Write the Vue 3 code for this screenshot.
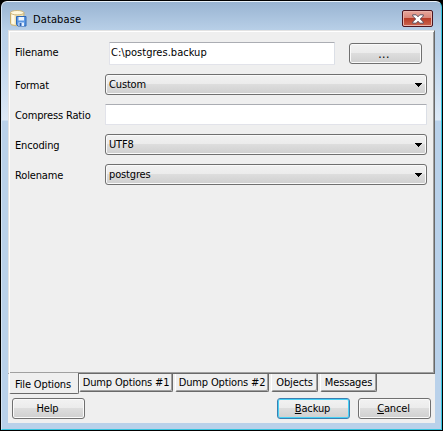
<script setup>
const fields = [
  { label: 'Format', value: 'Custom', combo: true },
  { label: 'Compress Ratio', value: '', combo: false },
  { label: 'Encoding', value: 'UTF8', combo: true },
  { label: 'Rolename', value: 'postgres', combo: true },
]
const tabs = [
  { text: 'File Options', cls: 'file' },
  { text: 'Dump Options #1', cls: 'dump-one' },
  { text: 'Dump Options #2', cls: 'dump-two' },
  { text: 'Objects', cls: 'objects' },
  { text: 'Messages', cls: 'messages' },
]
</script>

<template>
  <div class="window">
    <div class="frame">
      <header class="titlebar">
        <svg class="app-icon" width="17" height="17" viewBox="0 0 17 17">
          <path d="M0.500 2.500v11.200c0 1.200 3 2 6.700 2s6.700-.8 6.700-2V2.500z" fill="#f1e3b4" stroke="#c6ae72" />
          <path d="M1.500 4v9.500l3 1V5z" fill="#fffbe9" />
          <ellipse cx="7.200" cy="2.700" rx="6.700" ry="2.200" fill="#fff8dc" stroke="#cdb880" />
          <path d="M6.500 6.500h9.500v9.500H8l-1.500-1.500z" fill="#5b97e2" stroke="#2c68b8" />
          <rect x="8.500" y="7" width="5.500" height="3.500" fill="#eaf4ff" />
          <rect x="8.500" y="12.500" width="5.500" height="3.500" fill="#e4efff" />
          <rect x="9.500" y="13" width="2" height="3" fill="#2b62b4" />
        </svg>
        <span class="title">Database</span>
        <button class="close" aria-label="Close">
          <svg width="12" height="10" viewBox="0 0 12 10">
            <path d="M.7 .8H4.200L6 2.800 7.800 .8h3.500v1.200L8.300 5l3 3v1.200H7.800L6 7.200 4.200 9.200H.7V8l3-3-3-3z" fill="#fff" stroke="#4f4658" stroke-width=".9" />
          </svg>
        </button>
      </header>
      <main class="client">
        <section class="page">
          <div class="row file-row">
            <label class="label">Filename</label>
            <div class="input filename">C:\postgres.backup</div>
            <button class="button browse">...</button>
          </div>
          <div v-for="f in fields" :key="f.label" class="row">
            <label class="label">{{ f.label }}</label>
            <div :class="['control', f.combo ? 'combo' : 'input']">
              <span>{{ f.value }}</span>
              <svg v-if="f.combo" width="7" height="4" viewBox="0 0 7 4" shape-rendering="crispEdges">
                <path d="M0 0h7v1H6v1H5v1H4v1H3V3H2V2H1V1H0z" fill="#000" />
              </svg>
            </div>
          </div>
        </section>
        <nav class="tabs">
          <div v-for="(t, i) in tabs" :key="t.text" :class="['tab', t.cls, { active: i === 0 }]"><span>{{ t.text }}</span></div>
        </nav>
        <footer class="actions">
          <button class="button">Help</button>
          <button class="button primary"><u>B</u>ackup</button>
          <button class="button"><u>C</u>ancel</button>
        </footer>
      </main>
    </div>
  </div>
</template>

<style>
body { margin: 0; background: #000; }
</style>

<style scoped>
* { box-sizing: border-box; }
.window {
  width: 443px;
  height: 431px;
  padding: 1px;
  background: #000;
  border-radius: 6px 6px 0 0;
  font: 11px/14px "DejaVu Sans Condensed", "DejaVu Sans", sans-serif;
  font-stretch: condensed;
  letter-spacing: -.15px;
  color: #000;
}
.frame {
  height: 429px;
  padding: 0 6px 6px;
  border: 1px solid #34c4df;
  border-top-color: #e9f2fa;
  border-left-color: #d5e4f3;
  border-radius: 6px 6px 0 0;
  background: linear-gradient(#99b4d2 0, #b9d0e8 29px, #bcd3eb 50px, #dde9f6 118px, #b9d1ea 119px);
}
.titlebar { height: 28px; display: flex; align-items: flex-start; padding: 8px 2px 0 2px; }
.app-icon { flex: none; }
.title { line-height: 16px; margin: 2px 0 0 6px; letter-spacing: .12px; }
.close {
  width: 31px;
  height: 17px;
  margin-left: auto;
  padding: 0;
  display: flex;
  align-items: center;
  justify-content: center;
  border: 1px solid #4c1520;
  border-radius: 2px;
  background: linear-gradient(#e8a79c 0, #d98679 46%, #b83c27 50%, #cc6650 100%);
  box-shadow: inset 0 0 0 1px #e9b3aa;
}
.client { width: 427px; height: 393px; background: #efefef; display: flex; flex-direction: column; }
.page {
  height: 344px;
  padding: 11px 6px 0;
  border-top: 1px solid #e3e3e3;
  border-left: 1px solid #e3e3e3;
  border-right: 1px solid #696969;
  border-bottom: 1px solid #696969;
  box-shadow: inset 1px 1px 0 #fff, inset -1px -1px 0 #a0a0a0;
}
.row { display: flex; align-items: center; height: 21px; margin-bottom: 9px; }
.file-row { height: 23px; }
.label { width: 90px; flex: none; padding-top: 2px; }
.file-row .label { padding: 0 0 2px; }
.input { background: #fff; border: 1px solid #e2e3ea; border-top-color: #abadb3; border-right-color: #dbdfe6; border-radius: 1px; }
.filename { width: 226px; height: 23px; margin-left: 4px; padding: 3px 1px; letter-spacing: .03px; }
.browse { margin: 0 0 0 14px; }
.control { width: 322px; height: 21px; }
.combo, .button {
  border: 1px solid #707070;
  border-radius: 3px;
  background: linear-gradient(#f2f2f2 0, #ebebeb 49%, #dddddd 50%, #cfcfcf 100%);
  box-shadow: inset 0 0 0 1px #fafafa;
}
.combo { display: flex; align-items: center; justify-content: space-between; padding: 0 4px 0 3px; }
.combo span { padding-top: 1px; }
.button { width: 73px; height: 21px; padding: 0 2px 0 0; font: inherit; letter-spacing: inherit; color: #000; text-align: center; }
.button.browse { padding: 1px 3px 0 0; font-size: 12px; letter-spacing: .4px; }
.button.primary { border-color: #3c7fb1; box-shadow: inset 0 0 0 1px #48d1f5; margin-left: auto; }
.tabs { display: flex; align-items: flex-start; height: 24px; padding-left: 1px; }
.tab {
  height: 18px;
  padding-top: 2px;
  margin-right: 2px;
  text-align: center;
  white-space: nowrap;
  border-right: 1px solid #696969;
  border-bottom: 1px solid #696969;
  border-left: 1px solid #fff;
  border-radius: 0 0 2px 2px;
  box-shadow: inset -1px -1px 0 #a0a0a0;
}
.active { height: 21px; margin-top: -1px; margin-right: 0; padding: 5px 2px 0 0; background: #efefef; box-shadow: none; }
.file { width: 70px; }
.dump-one { width: 94px; }
.dump-two { width: 94px; }
.objects { width: 47px; }
.messages { width: 57px; }
.actions { display: flex; padding: 0 4px; gap: 8px; }
u { text-decoration-thickness: 1px; text-underline-offset: 1px; }
</style>
